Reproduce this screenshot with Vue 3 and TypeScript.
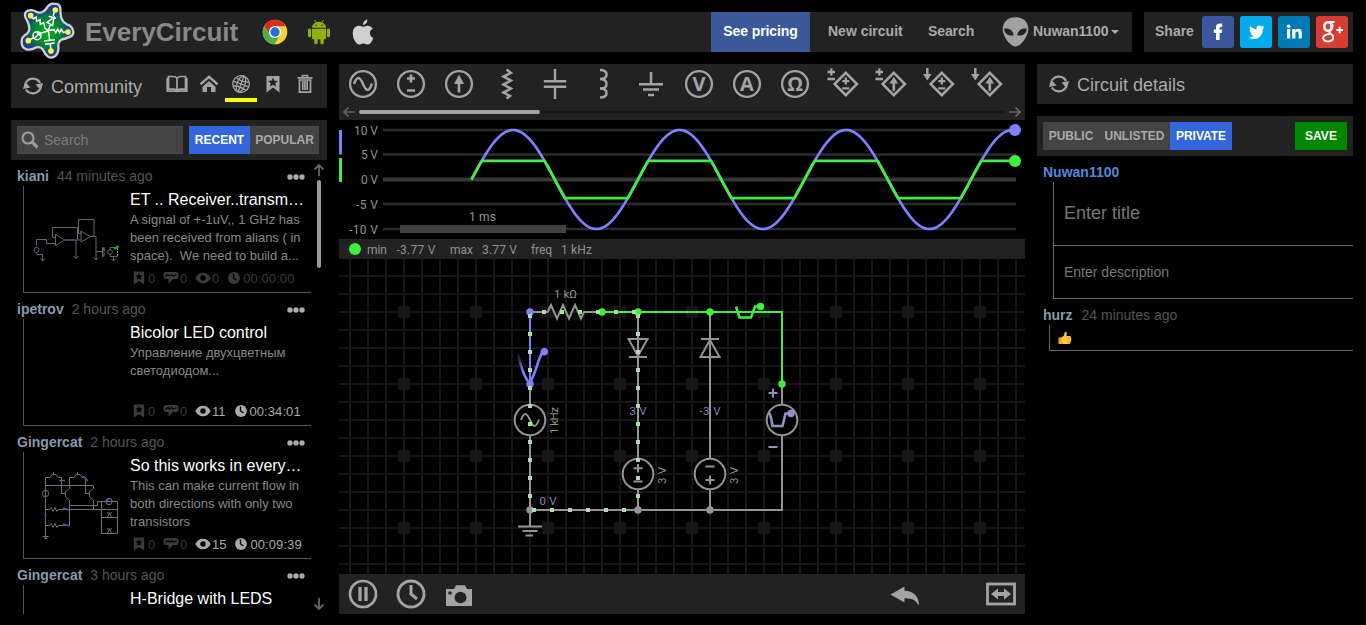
<script setup lang="ts">
interface Post {
  author: string
  when: string
  title: string
  lines: string[]
  views: string
  time: string
  idle: boolean
  thumb: string
}

const posts: Post[] = [
  {
    author: 'kiani', when: '44 minutes ago', title: 'ET .. Receiver..transm…',
    lines: ['A signal of +-1uV,, 1 GHz has', 'been received from alians ( in', 'space).\u00a0 We need to build a...'],
    views: '0', time: '00:00:00', idle: true, thumb: 'receiver',
  },
  {
    author: 'ipetrov', when: '2 hours ago', title: 'Bicolor LED control',
    lines: ['Управление двухцветным', 'светодиодом...'],
    views: '11', time: '00:34:01', idle: false, thumb: '',
  },
  {
    author: 'Gingercat', when: '2 hours ago', title: 'So this works in every…',
    lines: ['This can make current flow in', 'both directions with only two', 'transistors'],
    views: '15', time: '00:09:39', idle: false, thumb: 'switches',
  },
  {
    author: 'Gingercat', when: '3 hours ago', title: 'H-Bridge with LEDS',
    lines: [],
    views: '', time: '', idle: true, thumb: '',
  },
]

const tools = ['sine', 'dc', 'current', 'resistor', 'capacitor', 'inductor', 'ground', 'volt', 'amp', 'ohm', 'vcvs', 'vccs', 'ccvs', 'cccs']
const round = ['sine', 'dc', 'current', 'volt', 'amp', 'ohm']
const controlled = ['vcvs', 'vccs', 'ccvs', 'cccs']

const START = 132.5
const END = 676
const PERIOD = 166.5
const ZERO = 59.5
const VOLT = 4.95

function trace(limit: number): string {
  const pts: string[] = []
  for (let x = START; x <= END; x += 0.75) {
    const v = 10 * Math.sin(((x - START) / PERIOD) * 2 * Math.PI)
    const c = Math.max(-limit, Math.min(limit, v))
    pts.push(`${x.toFixed(2)},${(ZERO - c * VOLT).toFixed(2)}`)
  }
  return pts.join(' ')
}

const source = trace(10)
const clipped = trace(3.77)
const axis = [
  { label: '10 V', y: 10, w: 24 },
  { label: '5 V', y: 34.5, w: 17 },
  { label: '0 V', y: 59.5, w: 17 },
  { label: '-5 V', y: 84, w: 22 },
  { label: '-10 V', y: 109, w: 29 },
]

const range = (from: number, count: number, step = 18) => Array.from({ length: count }, (_, i) => from + i * step)
const columnDots = range(316, 11)
const topDots = range(544, 6)
const bottomDots = range(534, 6)
const padX = range(404, 9, 72)
const padY = range(312, 4, 72)
const gridX = range(350, 38)
const gridY = range(276, 17)
</script>

<template>
  <div class="page">
    <header class="top">
      <nav class="bar main-bar">
        <svg class="logo" viewBox="60 6 168 174" width="56" height="58">
          <defs>
            <radialGradient id="lg" gradientUnits="userSpaceOnUse" cx="142" cy="95" r="82">
              <stop offset="0" stop-color="#00b418" /><stop offset=".45" stop-color="#05892b" /><stop offset=".85" stop-color="#17408a" /><stop offset="1" stop-color="#1b3a90" />
            </radialGradient>
          </defs>
          <path d="M77 54Q71 36 84 32Q97 28 109 35Q118 40 127 36Q137 31 143 20Q152 8 164 12Q178 10 181 24Q181 40 184 54Q188 66 200 73Q215 76 219 91Q223 104 211 110Q196 117 184 119Q174 126 175 139Q177 156 168 166Q156 177 144 170Q135 163 129 149Q122 139 110 142Q94 151 80 148Q65 143 65 128Q64 113 74 106Q87 98 88 87Q88 72 77 54Z" fill="url(#lg)" stroke="#cdd0d6" stroke-width="7" stroke-linejoin="round" />
          <g fill="none" stroke="#fff" stroke-width="4.500">
            <path d="M92 47L101 56L108 51L110 64L120 59L121 73L131 68L135 85L145 92M166 30L159 47M146 49L168 55M162 52L141 67L158 76ZM152 71L145 92L162 89L167 98L173 87L179 98L184 88L190 98L197 95M145 92L149 121M132 123L165 119M135 133L164 129M151 132L153 153M145 92L122 100M85 122L101 113" />
            <circle cx="111" cy="107" r="12" /><path d="M102 116L120 98M111 99L119 98L119 107" />
          </g>
          <g fill="#fff04a"><circle cx="92" cy="47" r="8.500" /><circle cx="166" cy="30" r="8.500" /><circle cx="204" cy="96" r="8.500" /><circle cx="153" cy="153" r="8.500" /><circle cx="85" cy="122" r="8.500" /></g>
        </svg>
        <span class="brand">EveryCircuit</span>
        <svg class="chrome" viewBox="0 0 26 26" width="26" height="26">
          <circle cx="13" cy="13" r="12.3" fill="#fdd131" />
          <path d="M2.3 7A12.3 12.3 0 0 1 23.8 7.2H13L7.8 16Z" fill="#da2d20" />
          <path d="M2.3 7A12.3 12.3 0 0 0 12.5 25.3L18 16L13 19L7.8 16Z" fill="#4eae49" />
          <circle cx="13" cy="13" r="6.1" fill="#fff" /><circle cx="13" cy="13" r="4.7" fill="#2273d8" />
        </svg>
        <svg class="android" viewBox="0 0 22 26" width="22" height="26" fill="#8fb408">
          <path d="M4 8.8A7 6 0 0 1 18 8.8Z" /><path d="M6.4 1L8.5 4M15.6 1L13.5 4" stroke="#8fb408" />
          <circle cx="8" cy="6.2" r=".8" fill="#222" /><circle cx="14" cy="6.2" r=".8" fill="#222" />
          <path d="M4 9.8H18V19Q18 20.3 16.7 20.3H5.3Q4 20.3 4 19Z" />
          <rect x="0" y="9.4" width="3.1" height="8.8" rx="1.5" /><rect x="18.9" y="9.4" width="3.1" height="8.8" rx="1.5" />
          <rect x="6.3" y="17" width="3.3" height="8.3" rx="1.5" /><rect x="12.4" y="17" width="3.3" height="8.3" rx="1.5" />
        </svg>
        <svg class="apple" viewBox="0 0 22 26" width="22" height="26" fill="#cfcfcf">
          <path d="M15.300.300Q15.600 5 11 6.200Q10.800 2 15.300.300ZM11 7.800Q12.500 7.800 15 6.800Q18.500 6.300 20.700 9.500Q17.700 11.500 18 14.500Q18.200 17.800 21.300 19Q19 25.400 16 25.600Q14 25.400 12.500 24.700Q11 24.300 8.500 25.300Q5.500 26.500 3 22.300Q.300 18 .800 13Q1.500 7.500 6.200 6.700Q8.500 6.700 11 7.800Z" />
        </svg>
        <span class="grow"></span>
        <a class="pricing">See pricing</a>
        <a class="link new">New circuit</a>
        <a class="link find">Search</a>
        <svg class="alien" viewBox="0 0 27 30" width="27" height="30">
          <path d="M13.500.3C21 .3 26.300 5 26.300 12C26.300 19 19 29.500 13.500 29.500S.700 19 .700 12C.700 5 6 .3 13.500.3Z" fill="#a1a1a1" />
          <path d="M2.300 11.600C6 11 11 12.500 11.700 18.300C6.500 19.500 2 16.500 2.300 11.600ZM24.700 11.600C21 11 16 12.500 15.300 18.300C20.500 19.500 25 16.500 24.700 11.600Z" fill="#222" />
        </svg>
        <a class="link user">Nuwan1100</a><i class="caret"></i>
      </nav>
      <div class="bar share">
        <span class="share-label">Share</span>
        <svg width="32" height="32" viewBox="0 0 32 32"><rect width="32" height="32" rx="3" fill="#3b579d" /><path d="M14 24V17H11.800V13.400H14V11.200Q14 7.500 17.800 7.500H20.200V11H18.600Q17.600 11 17.600 12V13.400H20.200L19.800 17H17.600V24Z" fill="#fff" /></svg>
        <svg width="32" height="32" viewBox="0 0 32 32"><rect width="32" height="32" rx="3" fill="#00acee" /><path d="M24.500 11.500L22.800 13.300Q22.800 19 18.700 21.700Q14 24.500 8.700 21.400Q11.600 21.500 13.500 20Q11 19.500 10.500 17.600H12Q9.400 16.500 9.400 14L10.900 14.400Q8.700 12.500 10.100 10Q12.800 13.200 16.500 13.400Q16 9.500 19.500 9.500Q20.800 9.500 21.900 10.600L24.100 9.800L22.900 11.600Z" fill="#fff" /></svg>
        <svg width="32" height="32" viewBox="0 0 32 32"><rect width="32" height="32" rx="3" fill="#007bb6" /><path d="M9 13H12.200V22.600H9ZM14.200 13H17.300V14.400Q18.200 12.800 20.400 12.800Q23.800 12.800 23.800 16.700V22.600H20.600V17.600Q20.600 15.500 19 15.500Q17.400 15.500 17.400 17.600V22.600H14.200Z" fill="#fff" /><circle cx="10.600" cy="10.200" r="1.800" fill="#fff" /></svg>
        <svg width="32" height="32" viewBox="0 0 32 32"><rect width="32" height="32" rx="3" fill="#d73d32" /><g fill="none" stroke="#fff"><ellipse cx="12" cy="10.500" rx="3.700" ry="4.300" stroke-width="2.600" /><path d="M11 6H18.500M15 6.500Q18.300 11 14.500 14.200Q12 16 15 18Q18.500 20.500 16.500 23.700Q13.500 26.500 9 24.800Q5.500 22.500 8.300 19.700Q10.500 18 14 18" stroke-width="2" /><path d="M20.500 14H27M23.700 10.800V17.300" stroke-width="1.800" /></g></svg>
      </div>
    </header>

    <main class="columns">
      <aside class="left">
        <div class="bar community">
          <svg class="refresh" width="22" height="20" viewBox="0 0 22 20"><path d="M4 6.500A8 7.800 0 0 1 18 7M18 13A8 7.800 0 0 1 4 13.500" fill="none" stroke="#a4a4a4" stroke-width="2.200" /><path d="M13.500 8.500L21 7L19 14.500ZM8.500 11.500L1 13L3 5.500Z" fill="#a4a4a4" /></svg>
          <span class="heading">Community</span>
          <span class="grow"></span>
          <div class="tabs">
            <span class="tab"><svg width="22" height="20" viewBox="0 0 22 20" fill="none" stroke="#a4a4a4" stroke-width="1.700"><path d="M11 4.200Q9.700 2.500 7 2.500H2.500V15.200H8Q10.300 15.200 11 16.800Q11.700 15.200 14 15.200H19.500V2.500H15Q12.300 2.500 11 4.200V16.500M1.200 3.800V17.200H20.800V3.800" /></svg></span>
            <span class="tab"><svg width="20" height="20" viewBox="0 0 20 20"><path d="M1.500 10.300L10 2.800L18.500 10.300" fill="none" stroke="#a4a4a4" stroke-width="2.500" /><path d="M3.500 12.800L10 7L16.500 12.800V18H12V13H8V18H3.500Z" fill="#a4a4a4" /></svg></span>
            <span class="tab active"><svg width="20" height="20" viewBox="0 0 20 20" fill="none" stroke="#a4a4a4" stroke-width="1.300"><g transform="rotate(20 10 10)"><circle cx="10" cy="10" r="8.300" /><ellipse cx="10" cy="10" rx="4" ry="8.300" /><path d="M10 1.700V18.300M1.700 10H18.300M3 5.600Q10 8 17 5.600M3 14.400Q10 12 17 14.400" /></g></svg></span>
            <span class="tab"><svg width="20" height="20" viewBox="0 0 20 20"><path d="M3.500 2H16.500V18.500L10 13.500L3.500 18.500Z" fill="#a4a4a4" /><path d="M10 3.500L11.500 6.700L15 7L12.300 9.300L13.200 12.700L10 10.800L6.800 12.700L7.700 9.300L5 7L8.500 6.700Z" fill="#222" /></svg></span>
            <span class="tab"><svg width="18" height="20" viewBox="0 0 18 20" fill="none" stroke="#a4a4a4" stroke-width="1.700"><path d="M1.500 3.800H16.500M6.500 3.500V1.500H11.500V3.500M3.500 6V18.200H14.500V6M6.800 7V16M9 7V16M11.200 7V16M2.500 6H15.500" /></svg></span>
          </div>
        </div>

        <div class="bar filter">
          <div class="search-box">
            <svg width="18" height="18" viewBox="0 0 18 18"><circle cx="7" cy="7" r="5.500" fill="none" stroke="#9b9b9b" stroke-width="2.200" /><path d="M11 11L16.500 16.500" stroke="#9b9b9b" stroke-width="3.200" /></svg>
            <span>Search</span>
          </div>
          <div class="toggle"><b class="on recent">RECENT</b><b class="popular">POPULAR</b></div>
        </div>

        <div class="feed">
          <div class="posts">
            <article v-for="(p, i) in posts" :key="i" class="post">
              <div class="post-head">
                <b>{{ p.author }}</b><span class="when">{{ p.when }}</span>
                <svg width="18" height="6" viewBox="0 0 18 6" fill="#aaa"><circle cx="3" cy="3" r="2.700" /><circle cx="9" cy="3" r="2.700" /><circle cx="15" cy="3" r="2.700" /></svg>
              </div>
              <div class="post-body">
                <svg v-if="p.thumb === 'receiver'" class="thumb" viewBox="0 186 106 106" width="106" height="106" fill="none" stroke="#686868" stroke-width="1">
                  <path d="M36.500 246V239.500H46.500V243.500H55.500M55.500 234.500V245.500L65 240L55.500 234.500V237.500H52.500V227.500H77.500V239.500M65 240H80.500M76 240V258M73.500 256L76 258.500L78.500 256M81 231V242L90.500 236.500L81 231V233.500H78.500V219.500H94V236.500H90.500M94 236.500H96V260M96 251.500H102.500M102.500 247V257M102.500 248.500H104V251M102.500 256H104V247M37 252.500V254.500H42.500V261M40 258.500L42.500 261L45 258.500M93.500 257.500L96 260L98.500 257.500M113.500 257V261M111 258.500L113.500 261L116 258.500M117.500 256.500H110V254M110 250V247.500H115" />
                  <path d="M36.500 240V246M66 240H74" stroke="#5452a0" /><circle cx="36.500" cy="250" r="2.500" />
                  <circle cx="110" cy="252" r="2.300" /><path d="M117.500 248V256" stroke="#a3873c" stroke-dasharray="2 1" /><path d="M114.500 249L118.500 246" stroke="#18c425" stroke-width="2" />
                </svg>
                <svg v-if="p.thumb === 'switches'" class="thumb" viewBox="0 452 106 106" width="106" height="106" fill="none" stroke="#707070" stroke-width="1">
                  <path d="M45.500 538V477.500H50L52 474.500H56L58 477.500H61.500V493.500H65.500M53.500 474V472M45.500 485.500H93.500V488.500L89.500 491.500V497L93.500 500V509.500H117.500M69.500 485.500V488.500L65.500 491.500V497L69.500 500V525.500M69.500 485V477.500H74L76 474.500H80L82 477.500H85.500V493.500H89.500M77.500 474V472M45.500 509.500H49.500L51 507.500L53 511.500L55 507.500L57 511.500L58 509.500H93.500M69.500 505.500H97.500V501.500H117.500V533.500H101.500V501.500M101.500 517.500H117M45.500 525.500H49.500L51 523.500L53 527.500L55 523.500L57 527.500L58 525.500H69.500M42.500 536.500H48.500M44 538.500H47M107 518L109.500 513.500L112 518M107 513H112M107 534L109.500 529.500L112 534M107 529H112" />
                  <circle cx="45.500" cy="493.500" r="3.200" /><circle cx="109" cy="501.500" r="3.200" stroke="#7777aa" />
                  <path d="M59 480.500H65M63 508L69 510M63 524L69 526M83 476L88 481M45.500 513V517M106 501L109 499" stroke="#5553a4" stroke-width="1.500" />
                </svg>
                <div class="copy">
                  <h3>{{ p.title }}</h3>
                  <p v-for="(l, j) in p.lines" :key="j">{{ l }}</p>
                </div>
                <div v-if="p.time" class="stats">
                  <span class="dim mark"><svg width="12" height="14" viewBox="0 0 12 14"><path d="M.8.500H11.200V13.500L6 10L.8 13.500Z" fill="currentColor" /><path d="M6 2L7 4.200L9.500 4.500L7.700 6.200L8.200 8.800L6 7.500L3.800 8.800L4.300 6.200L2.500 4.500L5 4.200Z" fill="#000" /></svg>0</span>
                  <span class="dim talk"><svg width="16" height="14" viewBox="0 0 16 14"><path d="M3 1H13Q15.500 1 15.500 3.500V5.500Q15.500 8 13 8H10L5.500 12.500V8H3Q.500 8 .500 5.500V3.500Q.500 1 3 1Z" fill="currentColor" /><path d="M2.500 5.500L5 3.500L6.500 5L8.500 3.500L10 5L13.500 3.700" fill="none" stroke="#000" stroke-width="1.100" /></svg>0</span>
                  <span :class="['eye', { dim: p.idle }]"><svg width="16" height="12" viewBox="0 0 16 12"><path d="M.300 6Q3 .700 8 .700T15.700 6Q13 11.300 8 11.300T.300 6Z" fill="currentColor" /><circle cx="8" cy="6" r="2.700" fill="#000" /></svg>{{ p.views }}</span>
                  <span :class="['clock', { dim: p.idle }]"><svg width="12" height="12" viewBox="0 0 12 12"><circle cx="6" cy="6" r="5.900" fill="currentColor" /><path d="M5.500 1.500V6L8.500 8" fill="none" stroke="#000" stroke-width="1.400" /></svg>{{ p.time }}</span>
                </div>
              </div>
            </article>
          </div>
          <div class="scroll">
            <svg width="12" height="14" viewBox="0 0 12 14"><path d="M6 13V2M1.500 6.500L6 2L10.500 6.500" fill="none" stroke="#666" stroke-width="1.800" /></svg>
            <i></i>
            <span class="grow"></span>
            <svg width="12" height="14" viewBox="0 0 12 14"><path d="M6 1V12M1.500 7.500L6 12L10.500 7.500" fill="none" stroke="#666" stroke-width="1.800" /></svg>
          </div>
        </div>
      </aside>

      <section class="center">
        <div class="toolbar">
          <div class="tools">
            <svg v-for="t in tools" :key="t" width="48" height="40" viewBox="0 0 48 40" fill="none" stroke="#a4a4a4" stroke-width="2.300">
              <circle v-if="round.includes(t)" cx="24" cy="20" r="12.900" />
              <path v-if="t === 'sine'" d="M15 20C18 12 20.500 12 24 20S30 28 33 19.500" stroke-width="2.500" />
              <path v-if="t === 'dc'" d="M24 10.500V18.500M20 14.500H28M20 26.500H28" stroke-width="2.700" />
              <template v-if="t === 'current'"><path d="M24 28.500V17" stroke-width="2.700" /><path d="M24 10.500L29 20H19Z" fill="#a4a4a4" stroke="none" /></template>
              <path v-if="t === 'resistor'" d="M23.500 5.500L28 9L20.500 12.500L28 16.500L20.500 20.500L28 24.500L20.500 28.500L27 32L23.500 34.500" stroke-width="2.500" />
              <path v-if="t === 'capacitor'" d="M24 5V17M12.800 17.200H35.200M12.800 22.800H35.200M24 23V35" stroke-width="2.400" />
              <path v-if="t === 'inductor'" d="M21 6Q27.500 6 27.500 10.500T21 15Q27.500 15 27.500 20T21 24.500Q27.500 24.500 27.500 29T21 33.500" stroke-width="2.500" />
              <path v-if="t === 'ground'" d="M24 8V20M12 20.200H36M16 25.500H32M21 31H27" stroke-width="2.500" />
              <text v-if="t === 'volt'" x="24" y="27" class="meter">V</text>
              <text v-if="t === 'amp'" x="24" y="27" class="meter">A</text>
              <text v-if="t === 'ohm'" x="24" y="27" class="meter">Ω</text>
              <path v-if="controlled.includes(t)" d="M26.800 8.800L38 20L26.800 31.200L15.600 20Z" stroke-width="2.500" />
              <path v-if="t === 'vcvs' || t === 'vccs'" d="M12.300 4.500V11.500M8.500 8H16M8.500 15H16" />
              <template v-if="t === 'ccvs' || t === 'cccs'"><path d="M12.300 4V12" stroke-width="2.500" /><path d="M8 10H16.500L12.300 16.500Z" fill="#a4a4a4" stroke="none" /></template>
              <path v-if="t === 'vcvs' || t === 'ccvs'" d="M26.800 13.500V20.500M23.300 17.200H30.300M23.300 24.300H30.300" />
              <template v-if="t === 'vccs' || t === 'cccs'"><path d="M26.800 27V18" stroke-width="2.600" /><path d="M26.800 13L31.300 19.500H22.300Z" fill="#a4a4a4" stroke="none" /></template>
            </svg>
          </div>
          <div class="tool-scroll">
            <svg width="14" height="12" viewBox="0 0 14 12"><path d="M13 6H2M6.500 1.500L2 6L6.500 10.500" fill="none" stroke="#666" stroke-width="1.700" /></svg>
            <div class="track"><i></i></div>
            <svg width="14" height="12" viewBox="0 0 14 12"><path d="M1 6H12M7.500 1.500L12 6L7.500 10.500" fill="none" stroke="#666" stroke-width="1.700" /></svg>
          </div>
        </div>

        <svg class="scope" width="686" height="119" viewBox="0 0 686 119">
          <rect x="0" y="10" width="3" height="24.500" fill="#8080ff" /><rect x="0" y="38" width="3" height="24" fill="#40ee40" />
          <g v-for="a in axis" :key="a.label">
            <text :x="39 - a.w" :y="a.y + 4.500" :textLength="a.w" class="label">{{ a.label }}</text>
            <path :d="`M44 ${a.y}H677`" :stroke="a.y === 59.5 ? '#383838' : '#2c2c2c'" :stroke-width="a.y === 59.5 ? 4 : 2.4" />
          </g>
          <rect x="61" y="105" width="166" height="8" fill="#414141" />
          <text x="130" y="101" class="label" textLength="27">1 ms</text>
          <polyline :points="source" fill="none" stroke="#8080ff" stroke-width="2.700" />
          <polyline :points="clipped" fill="none" stroke="#40ee40" stroke-width="2.800" />
          <circle cx="676" cy="10" r="6" fill="#8080ff" /><circle cx="676" cy="41" r="6" fill="#40ee40" />
        </svg>

        <svg class="readout" width="686" height="20" viewBox="0 0 686 20">
          <circle cx="16" cy="10" r="6" fill="#40ee40" />
          <g class="label">
            <text x="28" y="15" textLength="20">min</text><text x="57.500" y="15" textLength="39">-3.77 V</text>
            <text x="111" y="15" textLength="23">max</text><text x="143" y="15" textLength="35">3.77 V</text>
            <text x="192" y="15" textLength="21">freq</text><text x="222" y="15" textLength="31">1 kHz</text>
          </g>
        </svg>

        <svg class="board" width="686" height="315" viewBox="339 259 686 315">
          <defs>
            <linearGradient id="fadeBlue" x1="0" y1="0" x2="0" y2="1"><stop offset="0" stop-color="#8080ff" stop-opacity=".1" /><stop offset=".6" stop-color="#8080ff" /></linearGradient>
          </defs>
          <g stroke="#161616" stroke-width="2">
            <path v-for="x in gridX" :key="'x' + x" :d="`M${x} 259V574`" />
            <path v-for="y in gridY" :key="'y' + y" :d="`M339 ${y}H1025`" />
          </g>
          <g fill="#161616">
            <template v-for="x in padX" :key="x"><rect v-for="y in padY" :key="y" :x="x - 6" :y="y - 6" width="12" height="12" /></template>
          </g>
          <g fill="none" stroke="#949494" stroke-width="2">
            <path d="M530 312H547.700L551 305L557 318.500L563 305L569 318.500L575 305L581 318.500L584 312H602M530 384V404.500M530 435.500V526M518 526.500H542M522.500 531H537.500M525.500 535.500H533" />
            <path d="M530 510H782V435.500M782 384V404.500M638 312V458.500M638 489.500V510M710 312V458.500M710 489.500V510" />
            <path d="M628.500 339H647.500L638 356ZM629 357H647M701 339H719M710 340L700.500 357H719.500Z" />
            <circle cx="530" cy="420" r="15.300" fill="#000" /><circle cx="638" cy="474" r="15.300" fill="#000" /><circle cx="710" cy="474" r="15.300" fill="#000" /><circle cx="782" cy="420" r="15.300" fill="#000" />
            <path d="M521 420C524 412 526.500 412 530 420S536 428 539 419.500M638 464V472.500M633.500 468.300H642.500M633.500 481.500H642.500M705.500 466.500H714.500M710 475.500V484.500M705.500 480H714.500" />
          </g>
          <g fill="none" stroke="#40ee40" stroke-width="2">
            <path d="M602 312H782V384" /><path d="M736 306.500L739.500 317.500H751L755 306.500H760" stroke-width="2.500" />
          </g>
          <path d="M530 312V384" stroke="#8080ff" stroke-width="2" />
          <path d="M518 354C521 367 525 379 530 383.500" fill="none" stroke="url(#fadeBlue)" stroke-width="2.600" />
          <path d="M530 382C535 376 538 359 542 353L544 352" fill="none" stroke="#8080ff" stroke-width="2.600" />
          <g fill="#949494"><circle cx="530" cy="510" r="3.700" /><circle cx="638" cy="510" r="3.700" /><circle cx="710" cy="510" r="3.700" /></g>
          <g fill="#40ee40"><circle cx="602" cy="312" r="3.700" /><circle cx="638" cy="312" r="3.700" /><circle cx="710" cy="312" r="3.700" /><circle cx="782" cy="384" r="3.700" /><circle cx="760.500" cy="306.500" r="3.700" /></g>
          <g fill="#8080ff"><circle cx="530" cy="312" r="3.700" /><circle cx="530" cy="384" r="3.700" /><circle cx="544.300" cy="351.700" r="3.700" /></g>
          <g fill="#acdcac">
            <template v-for="y in columnDots" :key="y"><rect x="528" :y="y - 2" width="4" height="4" /><rect x="636" :y="y - 2" width="4" height="4" /></template>
            <rect v-for="x in topDots" :key="'t' + x" :x="x - 2" y="310" width="4" height="4" />
            <rect v-for="x in bottomDots" :key="'b' + x" :x="x - 2" y="508" width="4" height="4" />
          </g>
          <g fill="none" stroke="#9292c4" stroke-width="2"><path d="M768.500 393H777.500M773 388.500V397.500M768.500 447H777.500" /><path d="M769.500 413Q771.500 418 772.500 426H782.500L785.500 413.500H790" stroke-width="2.600" /></g>
          <circle cx="791" cy="413.500" r="3.700" fill="#9292c4" />
          <g class="label small">
            <text x="554" y="298" textLength="23">1 kΩ</text>
            <text transform="translate(558 434) rotate(-90)" textLength="27">1 kHz</text>
            <text transform="translate(666 484) rotate(-90)" textLength="17">3 V</text>
            <text transform="translate(738 484) rotate(-90)" textLength="17">3 V</text>
            <g class="volts"><text x="629.500" y="415" textLength="17">3 V</text><text x="699.500" y="415" textLength="21">-3 V</text><text x="539.500" y="505" textLength="17">0 V</text></g>
          </g>
        </svg>

        <div class="controls">
          <svg width="48" height="40" viewBox="0 0 48 40" fill="none" stroke="#a4a4a4"><circle cx="24" cy="20" r="13" stroke-width="2.700" /><path d="M21 13V27M27 13V27" stroke-width="3.300" /></svg>
          <svg width="48" height="40" viewBox="0 0 48 40" fill="none" stroke="#a4a4a4"><circle cx="24" cy="20" r="13" stroke-width="2.900" /><path d="M24 11V20L30 25" stroke-width="3" /></svg>
          <svg width="48" height="40" viewBox="0 0 48 40"><path d="M11 15H19L21 11.300H30L32 15H37V32H11Z" fill="#a4a4a4" /><ellipse cx="25.500" cy="23.500" rx="6" ry="5.800" fill="#222" /><circle cx="15" cy="19" r="1.800" fill="#222" /></svg>
          <span class="grow"></span>
          <svg class="undo" width="48" height="40" viewBox="0 0 48 40"><path d="M9.500 20.500L23.500 12.500V16.800Q37 17.500 38 30.500H37Q33.500 23.500 23.500 24.200V28.500Z" fill="#a4a4a4" /></svg>
          <svg width="48" height="40" viewBox="0 0 48 40"><rect x="10.500" y="10" width="27" height="20" fill="none" stroke="#a4a4a4" stroke-width="2.800" /><path d="M14 20L21 14.500V18H27V14.500L34 20L27 25.500V22H21V25.500Z" fill="#a4a4a4" /></svg>
        </div>
      </section>

      <aside class="right">
        <div class="bar details">
          <svg class="refresh" width="22" height="20" viewBox="0 0 22 20"><path d="M4 6.500A8 7.800 0 0 1 18 7M18 13A8 7.800 0 0 1 4 13.500" fill="none" stroke="#a4a4a4" stroke-width="2.200" /><path d="M13.500 8.500L21 7L19 14.500ZM8.500 11.500L1 13L3 5.500Z" fill="#a4a4a4" /></svg>
          <span class="heading">Circuit details</span>
        </div>
        <div class="bar visibility">
          <div class="toggle"><b class="public">PUBLIC</b><b class="unlisted">UNLISTED</b><b class="on private">PRIVATE</b></div>
          <span class="grow"></span>
          <b class="save">SAVE</b>
        </div>
        <b class="owner">Nuwan1100</b>
        <div class="form">
          <div class="title-field">Enter title</div>
          <div class="text-field">Enter description</div>
        </div>
        <div class="comment-head"><b>hurz</b><span>24 minutes ago</span></div>
        <div class="comment">
          <svg width="14" height="14" viewBox="0 0 14 14"><path d="M.500 6.500H4V13H.500Z" fill="#f5a31b" /><path d="M3.500 6.500L6 4.500L6.800.8Q8.800.300 8.900 2.800L8.400 5H12Q13.400 5.500 12.800 6.800Q14 7.800 13 9Q13.700 10.200 12.500 11Q12.600 12.800 11 13H5L3.500 12Z" fill="#ffc83d" /><path d="M9 7H12.700M9 9.100H12.800M9 11.200H12.300" stroke="#df921b" stroke-width=".7" /></svg>
        </div>
      </aside>
    </main>
  </div>
</template>

<style>
body { background: #000; }
</style>

<style scoped>
.page { width: 1366px; height: 625px; overflow: hidden; background: #000; color: #aaa; font-family: "Liberation Sans", Arial, sans-serif; box-sizing: border-box; padding: 12px 13px 11px 11px; }
svg { display: block; flex: none; }
.bar { background: #222; display: flex; align-items: center; box-sizing: border-box; }
.grow { flex: 1; }
.top { display: flex; gap: 12px; height: 40px; }
.main-bar { width: 1121px; height: 40px; font-size: 14px; font-weight: bold; white-space: nowrap; }
.logo { margin: -2px 8px 0 9px; }
.brand { font-size: 26px; color: #888; width: 153px; margin-left: 1px; }
.chrome { margin-left: 24px; }
.android { margin-left: 20px; }
.apple { margin-left: 22px; }
.pricing { width: 99px; height: 40px; line-height: 38px; background: #3b5998; color: #fff; text-align: center; letter-spacing: -.1px; }
.link { line-height: 38px; height: 40px; }
.new { margin-left: 18px; width: 76px; }
.find { margin-left: 24px; width: 46px; letter-spacing: -.1px; }
.alien { margin-left: 28px; }
.user { margin-left: 4px; width: 77px; letter-spacing: -.1px; }
.caret { border: 4px solid transparent; border-top-color: #aaa; border-bottom: 0; margin: 0 13px 0 1px; }
.share { width: 209px; padding-left: 11px; gap: 6px; margin-left: 0; }
.share-label { font-size: 14px; font-weight: bold; width: 41px; line-height: 38px; height: 40px; }
.columns { display: flex; gap: 12px; margin-top: 12px; height: 550px; }
.left { width: 316px; display: flex; flex-direction: column; }
.community { height: 44px; padding-left: 11px; }
.heading { font-size: 18px; margin-left: 7px; padding-top: 2px; }
.tabs { display: flex; height: 44px; margin-right: 6px; }
.tab { width: 32px; height: 38px; box-sizing: border-box; display: flex; justify-content: center; padding-top: 10px; }
.tab.active { border-bottom: 4px solid #ff0; }
.filter { height: 40px; margin-top: 12px; padding: 0 7px 0 6px; gap: 6px; }
.search-box { width: 166px; height: 28px; background: #444; display: flex; align-items: center; gap: 5px; padding-left: 4px; box-sizing: border-box; color: #7c7c7c; font-size: 14px; }
.toggle { display: flex; height: 28px; background: #444; font-size: 12px; line-height: 29px; text-align: center; white-space: nowrap; }
.toggle .on { background: #3366dd; color: #fff; }
.recent { width: 61px; }
.popular { width: 69px; }
.feed { display: flex; height: 454px; overflow: hidden; }
.posts { width: 300px; padding-left: 6px; box-sizing: border-box; }
.post { height: 133px; padding-top: 7px; box-sizing: border-box; }
.post:last-child { height: 121px; }
.post-head { display: flex; align-items: center; height: 19px; padding-bottom: 0; font-size: 14px; line-height: 17px; color: #555; }
.post-head b { color: #8899aa; }
.when { margin-left: 8px; flex: 1; }
.post-head svg { margin-right: 6px; margin-top: 1px; }
.post-body { margin-left: 6px; height: 107px; border-left: 1px solid #555; border-bottom: 1px solid #555; box-sizing: border-box; display: grid; grid-template: 85px 21px / 106px 181px; }
.thumb { grid-area: 1 / 1 / 3 / 2; overflow: visible; margin-left: -24px; }
.copy { grid-area: 1 / 2; }
.copy h3 { font-size: 16px; font-weight: normal; color: #fff; margin: 5px 0 2px; line-height: 18px; white-space: nowrap; }
.copy p { margin: 0; font-size: 13px; line-height: 18px; color: #888; white-space: nowrap; }
.stats { grid-area: 2 / 2; display: flex; font-size: 13px; color: #aaa; padding-left: 3px; height: 14px; }
.stats span { display: flex; align-items: center; }
.stats .dim { color: #3b3b3b; }
.mark { width: 30px; gap: 3px; }
.talk { width: 32px; gap: 1px; }
.eye { gap: 1px; margin-right: 9px; }
.clock { gap: 3px; letter-spacing: .08px; }
.scroll { width: 16px; display: flex; flex-direction: column; align-items: center; padding: 3px 0; box-sizing: border-box; }
.scroll i { width: 4px; height: 88px; border-radius: 2px; background: #999; margin-top: 3px; }
.center { width: 686px; }
.toolbar { height: 56px; background: #222; }
.tools { display: flex; height: 40px; }
.tool-scroll { display: flex; align-items: center; height: 16px; padding: 0 3px; }
.track { flex: 1; height: 2px; background: #171717; margin: 0 3px; display: flex; align-items: center; }
.track i { width: 181px; height: 4px; border-radius: 2px; background: #a4a4a4; }
.meter { font: bold 20px "Open Sans", sans-serif; fill: #a4a4a4; stroke: none; text-anchor: middle; }
.label { font: 12px Roboto, sans-serif; fill: #939393; }
.small { font-size: 11.500px; }
.volts { fill: #8282b4; }
.scope { background: #000; }
.readout { background: #222; }
.board { background: #000; }
.controls { display: flex; height: 40px; background: #222; }
.undo { margin-right: 48px; }
.right { width: 316px; display: flex; flex-direction: column; }
.details { height: 40px; padding-left: 11px; }
.visibility { height: 40px; margin-top: 12px; padding: 0 6px; }
.public { width: 56px; }
.unlisted { width: 71px; }
.private { width: 62px; }
.save { width: 52px; height: 28px; line-height: 28px; background: #080; color: #fff; font-size: 12px; text-align: center; }
.owner { color: #5588dd; font-size: 14px; line-height: 18px; margin: 7px 0 0 6px; }
.form { margin: 1px 0 0 16px; border-left: 1px solid #666; color: #777; }
.title-field { font-size: 18px; height: 64px; line-height: 62px; box-sizing: border-box; border-bottom: 1px solid #666; padding-left: 10px; }
.text-field { font-size: 14px; height: 53px; line-height: 53px; box-sizing: border-box; border-bottom: 1px solid #666; padding-left: 10px; }
.comment-head { margin: 7px 0 0 6px; font-size: 14px; line-height: 18px; height: 19px; color: #555; }
.comment-head b { color: #8899aa; margin-right: 9px; }
.comment { margin: 0 0 0 12px; height: 26px; box-sizing: border-box; border-left: 1px solid #666; border-bottom: 1px solid #666; padding: 6px 0 0 8px; }
</style>
